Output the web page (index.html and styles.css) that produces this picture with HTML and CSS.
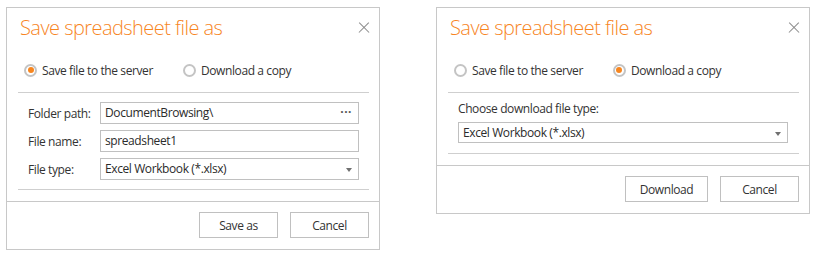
FILE: index.html
```html
<!DOCTYPE html>
<html lang="en">

<head>
    <meta charset="UTF-8">
    <title>Save spreadsheet file as</title>
    <link rel="stylesheet" href="styles.css">
</head>

<body>
    <div class="dialogs">
        <!-- Save to server -->
        <div class="dialog">
            <div class="dialog-header">
                <div class="dialog-title">Save spreadsheet file as</div>
                <span class="close"></span>
            </div>
            <div class="dialog-content">
                <div class="radio-group">
                    <label class="radio"><span class="radio-mark checked"></span>Save file to the server</label>
                    <label class="radio"><span class="radio-mark"></span>Download a copy</label>
                </div>
                <div class="section">
                    <div class="form-row">
                        <span class="form-label">Folder path:</span>
                        <div class="field">DocumentBrowsing\<span class="ellipsis">&middot;&middot;&middot;</span></div>
                    </div>
                    <div class="form-row">
                        <span class="form-label">File name:</span>
                        <div class="field">spreadsheet1</div>
                    </div>
                    <div class="form-row">
                        <span class="form-label">File type:</span>
                        <div class="field">Excel Workbook (*.xlsx)<span class="arrow"></span></div>
                    </div>
                </div>
            </div>
            <div class="dialog-footer">
                <button class="btn">Save as</button>
                <button class="btn">Cancel</button>
            </div>
        </div>

        <!-- Download a copy -->
        <div class="dialog">
            <div class="dialog-header">
                <div class="dialog-title">Save spreadsheet file as</div>
                <span class="close"></span>
            </div>
            <div class="dialog-content">
                <div class="radio-group">
                    <label class="radio"><span class="radio-mark"></span>Save file to the server</label>
                    <label class="radio"><span class="radio-mark checked"></span>Download a copy</label>
                </div>
                <div class="section section-download">
                    <div class="download-label">Choose download file type:</div>
                    <div class="field field-select">Excel Workbook (*.xlsx)<span class="arrow"></span></div>
                </div>
            </div>
            <div class="dialog-footer">
                <button class="btn btn-wide">Download</button>
                <button class="btn">Cancel</button>
            </div>
        </div>
    </div>
</body>

</html>
```

FILE: styles.css
```css
body {
    margin: 0;
    background: #fff;
    color: #333;
    font-family: 'Open Sans', 'Noto Sans', sans-serif;
    font-size: 12px;
    letter-spacing: -0.4px;
}

.dialogs {
    display: flex;
    align-items: flex-start;
    gap: 56px;
    padding: 7px 0 0 6px;
}

.dialog {
    width: 372px;
    border: 1px solid #c8c8c8;
    background: #fff;
}

.dialog-header {
    display: flex;
    justify-content: space-between;
    padding: 6px 10px 0 13px;
}

.dialog-title {
    font-size: 20px;
    font-weight: 300;
    line-height: 28px;
    letter-spacing: -0.55px;
    color: #f7861f;
}

/* close cross */
.close {
    position: relative;
    width: 11px;
    height: 11px;
    margin-top: 8px;
}

.close::before, .close::after {
    content: '';
    position: absolute;
    left: -1px;
    top: 5px;
    width: 14px;
    height: 1.4px;
    background: #8a8a8a;
    transform: rotate(45deg);
}

.close::after {
    transform: rotate(-45deg);
}

.dialog-content {
    padding: 0 10px 0 11px;
}

.radio-group {
    display: flex;
    height: 20px;
    align-items: center;
    margin-top: 18px;
    padding-left: 6px;
    gap: 30px;
}

.radio {
    display: flex;
    align-items: center;
    gap: 5px;
}

.radio-mark {
    width: 9px;
    height: 9px;
    border: 2px solid #c4c4c4;
    border-radius: 50%;
    position: relative;
}

.radio-mark.checked::after {
    content: '';
    position: absolute;
    left: 1.5px;
    top: 1.5px;
    width: 6px;
    height: 6px;
    border-radius: 50%;
    background: #f7861f;
}

.section {
    margin-top: 12px;
    border-top: 1px solid #cfcfcf;
    border-bottom: 1px solid #cfcfcf;
    padding: 9px 10px 9px 10px;
    display: flex;
    flex-direction: column;
    gap: 6px;
}

.form-row {
    display: flex;
    align-items: center;
}

.form-label {
    width: 72px;
}

.field {
    flex: 1;
    height: 20px;
    line-height: 20px;
    border: 1px solid #c0c0c0;
    padding: 0 4px;
    color: #2b2b2b;
    position: relative;
}

.ellipsis {
    position: absolute;
    right: 6px;
    top: -1px;
    font-weight: bold;
    letter-spacing: 0.5px;
    color: #555;
}

.arrow {
    position: absolute;
    right: 6px;
    top: 9px;
    border-left: 3.5px solid transparent;
    border-right: 3.5px solid transparent;
    border-top: 4px solid #707070;
}

.section-download {
    padding: 8px 11px 10px 10px;
    gap: 0;
}

.download-label {
    line-height: 16px;
    margin-bottom: 5px;
}

.field-select {
    flex: none;
    height: 19px;
    line-height: 19px;
}

.dialog-footer {
    margin-top: 11px;
    border-top: 1px solid #c8c8c8;
    display: flex;
    justify-content: flex-end;
    gap: 12px;
    padding: 10px 10px 11px;
}

.btn {
    width: 79px;
    height: 26px;
    border: 1px solid #c0c0c0;
    background: #fff;
    font-family: inherit;
    font-size: 12px;
    letter-spacing: -0.4px;
    color: #333;
    padding: 0;
}

.btn-wide {
    width: 83px;
}
```
